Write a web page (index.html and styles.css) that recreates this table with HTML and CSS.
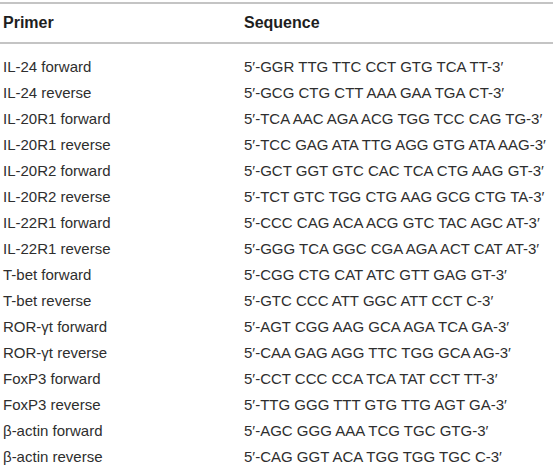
FILE: index.html
```html
<!DOCTYPE html>
<html>
<head>
<meta charset="utf-8">
<link rel="stylesheet" href="styles.css">
</head>
<body>
<div class="table">
  <div class="row head">
    <div class="c1">Primer</div>
    <div class="c2">Sequence</div>
  </div>
  <div class="body">
    <div class="row"><div class="c1">IL-24 forward</div><div class="c2">5′-GGR TTG TTC CCT GTG TCA TT-3′</div></div>
    <div class="row"><div class="c1">IL-24 reverse</div><div class="c2">5′-GCG CTG CTT AAA GAA TGA CT-3′</div></div>
    <div class="row"><div class="c1">IL-20R1 forward</div><div class="c2">5′-TCA AAC AGA ACG TGG TCC CAG TG-3′</div></div>
    <div class="row"><div class="c1">IL-20R1 reverse</div><div class="c2">5′-TCC GAG ATA TTG AGG GTG ATA AAG-3′</div></div>
    <div class="row"><div class="c1">IL-20R2 forward</div><div class="c2">5′-GCT GGT GTC CAC TCA CTG AAG GT-3′</div></div>
    <div class="row"><div class="c1">IL-20R2 reverse</div><div class="c2">5′-TCT GTC TGG CTG AAG GCG CTG TA-3′</div></div>
    <div class="row"><div class="c1">IL-22R1 forward</div><div class="c2">5′-CCC CAG ACA ACG GTC TAC AGC AT-3′</div></div>
    <div class="row"><div class="c1">IL-22R1 reverse</div><div class="c2">5′-GGG TCA GGC CGA AGA ACT CAT AT-3′</div></div>
    <div class="row"><div class="c1">T-bet forward</div><div class="c2">5′-CGG CTG CAT ATC GTT GAG GT-3′</div></div>
    <div class="row"><div class="c1">T-bet reverse</div><div class="c2">5′-GTC CCC ATT GGC ATT CCT C-3′</div></div>
    <div class="row"><div class="c1">ROR-γt forward</div><div class="c2">5′-AGT CGG AAG GCA AGA TCA GA-3′</div></div>
    <div class="row"><div class="c1">ROR-γt reverse</div><div class="c2">5′-CAA GAG AGG TTC TGG GCA AG-3′</div></div>
    <div class="row"><div class="c1">FoxP3 forward</div><div class="c2">5′-CCT CCC CCA TCA TAT CCT TT-3′</div></div>
    <div class="row"><div class="c1">FoxP3 reverse</div><div class="c2">5′-TTG GGG TTT GTG TTG AGT GA-3′</div></div>
    <div class="row"><div class="c1">β-actin forward</div><div class="c2">5′-AGC GGG AAA TCG TGC GTG-3′</div></div>
    <div class="row"><div class="c1">β-actin reverse</div><div class="c2">5′-CAG GGT ACA TGG TGG TGC C-3′</div></div>
  </div>
</div>
</body>
</html>
```

FILE: styles.css
```css
html, body {
  margin: 0;
  padding: 0;
  background: #ffffff;
}
body {
  font-family: "Liberation Sans", Arial, sans-serif;
  font-size: 15px;
  color: #2e2e2e;
}
.table {
  width: 553px;
  margin-top: 2px;
  border-top: 2px solid #c4c4c4;
}
.row {
  display: grid;
  grid-template-columns: 241px 1fr;
  padding-left: 3px;
  height: 26px;
  align-items: center;
  white-space: nowrap;
}
.head {
  height: 38px;
  font-size: 16px;
  font-weight: bold;
  color: #1e1e1e;
  border-bottom: 2px solid #c4c4c4;
}
.body {
  padding-top: 9px;
}
```
